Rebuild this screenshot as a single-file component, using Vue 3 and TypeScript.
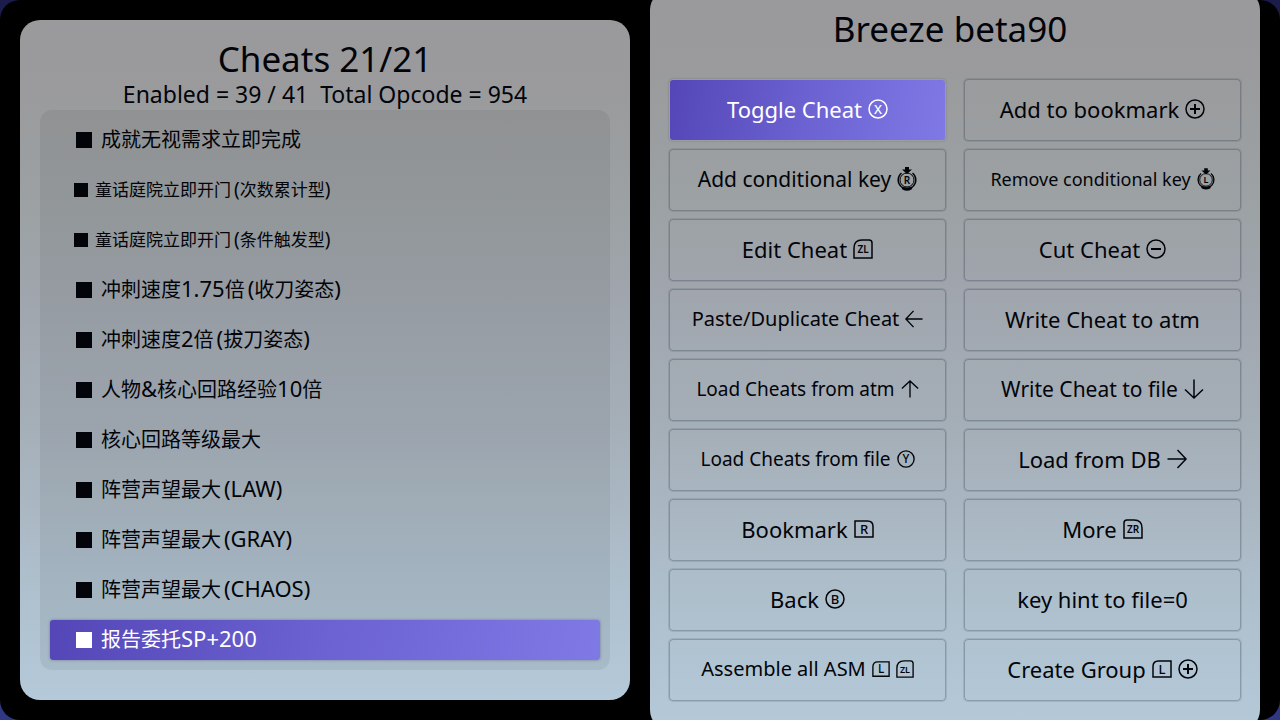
<script setup lang="ts">
import { ref } from 'vue'

interface Cheat { label: string; small?: boolean }
interface Action { label: string; icons: string[]; size: string }

const summary = 'Enabled = 39 / 41\u00a0 Total Opcode = 954'

const cheats: Cheat[] = [
  { label: '成就无视需求立即完成' },
  { label: '童话庭院立即开门(次数累计型)', small: true },
  { label: '童话庭院立即开门(条件触发型)', small: true },
  { label: '冲刺速度1.75倍(收刀姿态)' },
  { label: '冲刺速度2倍(拔刀姿态)' },
  { label: '人物&核心回路经验10倍' },
  { label: '核心回路等级最大' },
  { label: '阵营声望最大(LAW)' },
  { label: '阵营声望最大(GRAY)' },
  { label: '阵营声望最大(CHAOS)' },
  { label: '报告委托SP+200' },
]

const actions: Action[] = [
  { label: 'Toggle Cheat', icons: ['X'], size: 'lg' },
  { label: 'Add to bookmark', icons: ['plus'], size: 'lg' },
  { label: 'Add conditional key', icons: ['stickR'], size: 'md' },
  { label: 'Remove conditional key', icons: ['stickL'], size: 'xs' },
  { label: 'Edit Cheat', icons: ['ZL'], size: 'lg' },
  { label: 'Cut Cheat', icons: ['minus'], size: 'lg' },
  { label: 'Paste/Duplicate Cheat', icons: ['left'], size: 'sm' },
  { label: 'Write Cheat to atm', icons: [], size: 'lg' },
  { label: 'Load Cheats from atm', icons: ['up'], size: 'load' },
  { label: 'Write Cheat to file', icons: ['down'], size: 'md' },
  { label: 'Load Cheats from file', icons: ['Y'], size: 'load' },
  { label: 'Load from DB', icons: ['right'], size: 'lg' },
  { label: 'Bookmark', icons: ['R'], size: 'lg' },
  { label: 'More', icons: ['ZR'], size: 'lg' },
  { label: 'Back', icons: ['B'], size: 'lg' },
  { label: 'key hint to file=0', icons: [], size: 'lg' },
  { label: 'Assemble all ASM', icons: ['L', 'ZL'], size: 'sm' },
  { label: 'Create Group', icons: ['L', 'plus'], size: 'lg' },
]

const currentCheat = ref(10)
const currentAction = ref(0)

const isHan = (s: string) => /[\u4e00-\u9fff]/.test(s)
const runs = (s: string) => s.match(/[\u4e00-\u9fff]+|[^\u4e00-\u9fff]+/g) ?? []

const arrowTurn: Record<string, number> = { left: 0, up: 90, right: 180, down: 270 }
const shoulder: Record<string, string> = {
  L: 'M6.5 2H19V18H1V7.5Q1 2 6.5 2Z',
  R: 'M1 2H13.5Q19 2 19 7.5V18H1Z',
  ZL: 'M9 1H16Q19 1 19 4V19H1V9Q1 1 9 1Z',
  ZR: 'M4 1H11Q19 1 19 9V19H1V4Q1 1 4 1Z',
}
</script>

<template>
  <main class="screen">
    <section class="panel cheats">
      <h1>Cheats 21/21</h1>
      <p class="summary">{{ summary }}</p>
      <ul class="list">
        <li v-for="(c, i) in cheats" :key="c.label">
          <button
            type="button"
            class="cheat"
            :class="{ small: c.small, active: i === currentCheat }"
            @click="currentCheat = i"
          >
            <span class="box"></span>
            <span class="name"><span v-for="(r, k) in runs(c.label)" :key="k" :class="{ han: isHan(r), bracket: r.startsWith('(') }">{{ r }}</span></span>
          </button>
        </li>
      </ul>
    </section>

    <section class="panel menu">
      <h1>Breeze beta90</h1>
      <div class="grid">
        <button
          v-for="(a, i) in actions"
          :key="a.label"
          type="button"
          class="action"
          :class="[a.size, { active: i === currentAction }]"
          @click="currentAction = i"
        >
          <span>{{ a.label }}</span>
          <svg v-for="n in a.icons" :key="n" class="icon" viewBox="0 0 20 20" aria-hidden="true">
            <g v-if="n in arrowTurn" :transform="`rotate(${arrowTurn[n]} 10 10)`">
              <path d="M19.5 10H1M9.5 1L1 10L9.5 19" />
            </g>
            <template v-else-if="n in shoulder">
              <path :d="shoulder[n]" />
              <text v-if="n.length === 1" x="10" y="14.7" font-size="13" class="medium">{{ n }}</text>
              <text v-else x="10" y="14" font-size="10" class="heavy">{{ n }}</text>
            </template>
            <template v-else-if="n.startsWith('stick')">
              <path class="solid" d="M8 -2H12V0.5H15L10 5L5 0.5H8Z" />
              <path d="M4.5 4A9 9 0 0 0 4 17.500M15.500 4A9 9 0 0 1 16 17.500" />
              <circle class="thin" cx="10" cy="11" r="7" />
              <path class="solid" d="M3 16.500Q10 20.500 17 16.500L14.500 20.500Q10 23 5.500 20.500Z" />
              <text x="10" y="14.5" font-size="10" class="heavy">{{ n.slice(5) }}</text>
            </template>
            <template v-else>
              <circle cx="10" cy="10" r="9" />
              <path v-if="n === 'plus'" class="bold" d="M5 10H15M10 5V15" />
              <path v-else-if="n === 'minus'" class="bold" d="M5 10H15" />
              <text v-else x="10" y="14.7" font-size="13" class="medium">{{ n }}</text>
            </template>
          </svg>
        </button>
      </div>
    </section>
  </main>
</template>

<style>
body {
  margin: 0;
  background: linear-gradient(#1b1b4c, #303884);
}
</style>

<style scoped>
.screen {
  display: grid;
  grid-template-columns: 1fr 1fr;
  gap: 20px;
  box-sizing: border-box;
  min-height: 100vh;
  padding: 0 20px;
  overflow: hidden;
  border-radius: 20px;
  background: #000;
  color: #020409;
  font-family: "Noto Sans", "Noto Sans CJK SC", sans-serif;
  font-weight: 400;
}
.panel {
  box-sizing: border-box;
  border-radius: 20px;
  background: linear-gradient(#9a999b 0%, #9a9b9d 12%, #9ca1a3 28%, #a0a5ad 40%, #a5afb8 60%, #aebfcc 82%, #b4c9d9 100%);
}
.cheats {
  margin: 20px 0;
  padding: 17px 20px 30px;
}
.menu {
  margin: -10px 0;
  padding: 17px 19px 28px;
}
h1 {
  margin: 0;
  font-size: 35px;
  line-height: 44px;
  font-weight: inherit;
  text-align: center;
}
.menu h1 {
  padding-right: 10px;
}
.summary {
  margin: 0;
  padding-bottom: 3px;
  font-size: 23px;
  line-height: 26px;
  text-align: center;
}
.list {
  display: flex;
  flex-direction: column;
  gap: 10px;
  margin: 0;
  padding: 10px;
  border-radius: 12px;
  background: rgba(0, 0, 0, 0.06);
  list-style: none;
}
button {
  box-sizing: border-box;
  margin: 0;
  color: inherit;
  font: inherit;
  cursor: pointer;
}
.cheat {
  display: flex;
  align-items: center;
  gap: 9px;
  width: 100%;
  height: 40px;
  padding: 0 26px;
  border: 0;
  border-radius: 3px;
  background: none;
  font-size: 22px;
  line-height: 38px;
  text-align: left;
  white-space: nowrap;
}
.cheat.small {
  gap: 7px;
  padding: 0 24px;
  font-size: 19px;
}
.name {
  padding-bottom: 2px;
}
.box {
  width: 16px;
  height: 16px;
  background: currentColor;
}
.small .box {
  width: 14px;
  height: 14px;
}
.han {
  font-size: 20px;
}
.small .han {
  font-size: 17px;
}
.bracket {
  margin-left: 3px;
}
.grid {
  display: grid;
  grid-template-columns: 1fr 1fr;
  gap: 8px 18px;
  padding-top: 28px;
}
.action {
  display: flex;
  align-items: center;
  justify-content: center;
  gap: 6px;
  height: 62px;
  padding: 0 8px 2px;
  border: 1px solid rgba(30, 45, 60, 0.28);
  border-radius: 4px;
  background: none;
  box-shadow: 0 0 0 1px rgba(30, 45, 60, 0.12);
  font-size: 22px;
  line-height: 30px;
  white-space: nowrap;
}
.md {
  font-size: 21px;
}
.sm {
  font-size: 20px;
}
.load {
  font-size: 19px;
}
.xs {
  font-size: 18px;
}
.active {
  color: #fff;
  background: linear-gradient(100deg, #5446b6, #6c62d2 50%, #7f79e5);
  background-clip: padding-box;
  box-shadow: 0 0 3px rgba(40, 40, 70, 0.4);
}
.action.active {
  border-color: transparent;
  box-shadow: 0 0 2px rgba(40, 40, 70, 0.3);
}
.icon {
  flex: none;
  width: 20px;
  height: 20px;
  overflow: visible;
  fill: none;
  stroke: currentColor;
  stroke-width: 1.5;
}
.sm .icon,
.load .icon,
.xs .icon {
  width: 18px;
  height: 18px;
}
.icon text {
  fill: currentColor;
  stroke: none;
  text-anchor: middle;
}
.icon .medium {
  font-weight: 500;
}
.icon .heavy {
  font-weight: 600;
}
.icon .solid {
  fill: currentColor;
  stroke: none;
}
.icon .thin {
  stroke-width: 1;
}
.icon .bold {
  stroke-width: 2;
}
</style>
